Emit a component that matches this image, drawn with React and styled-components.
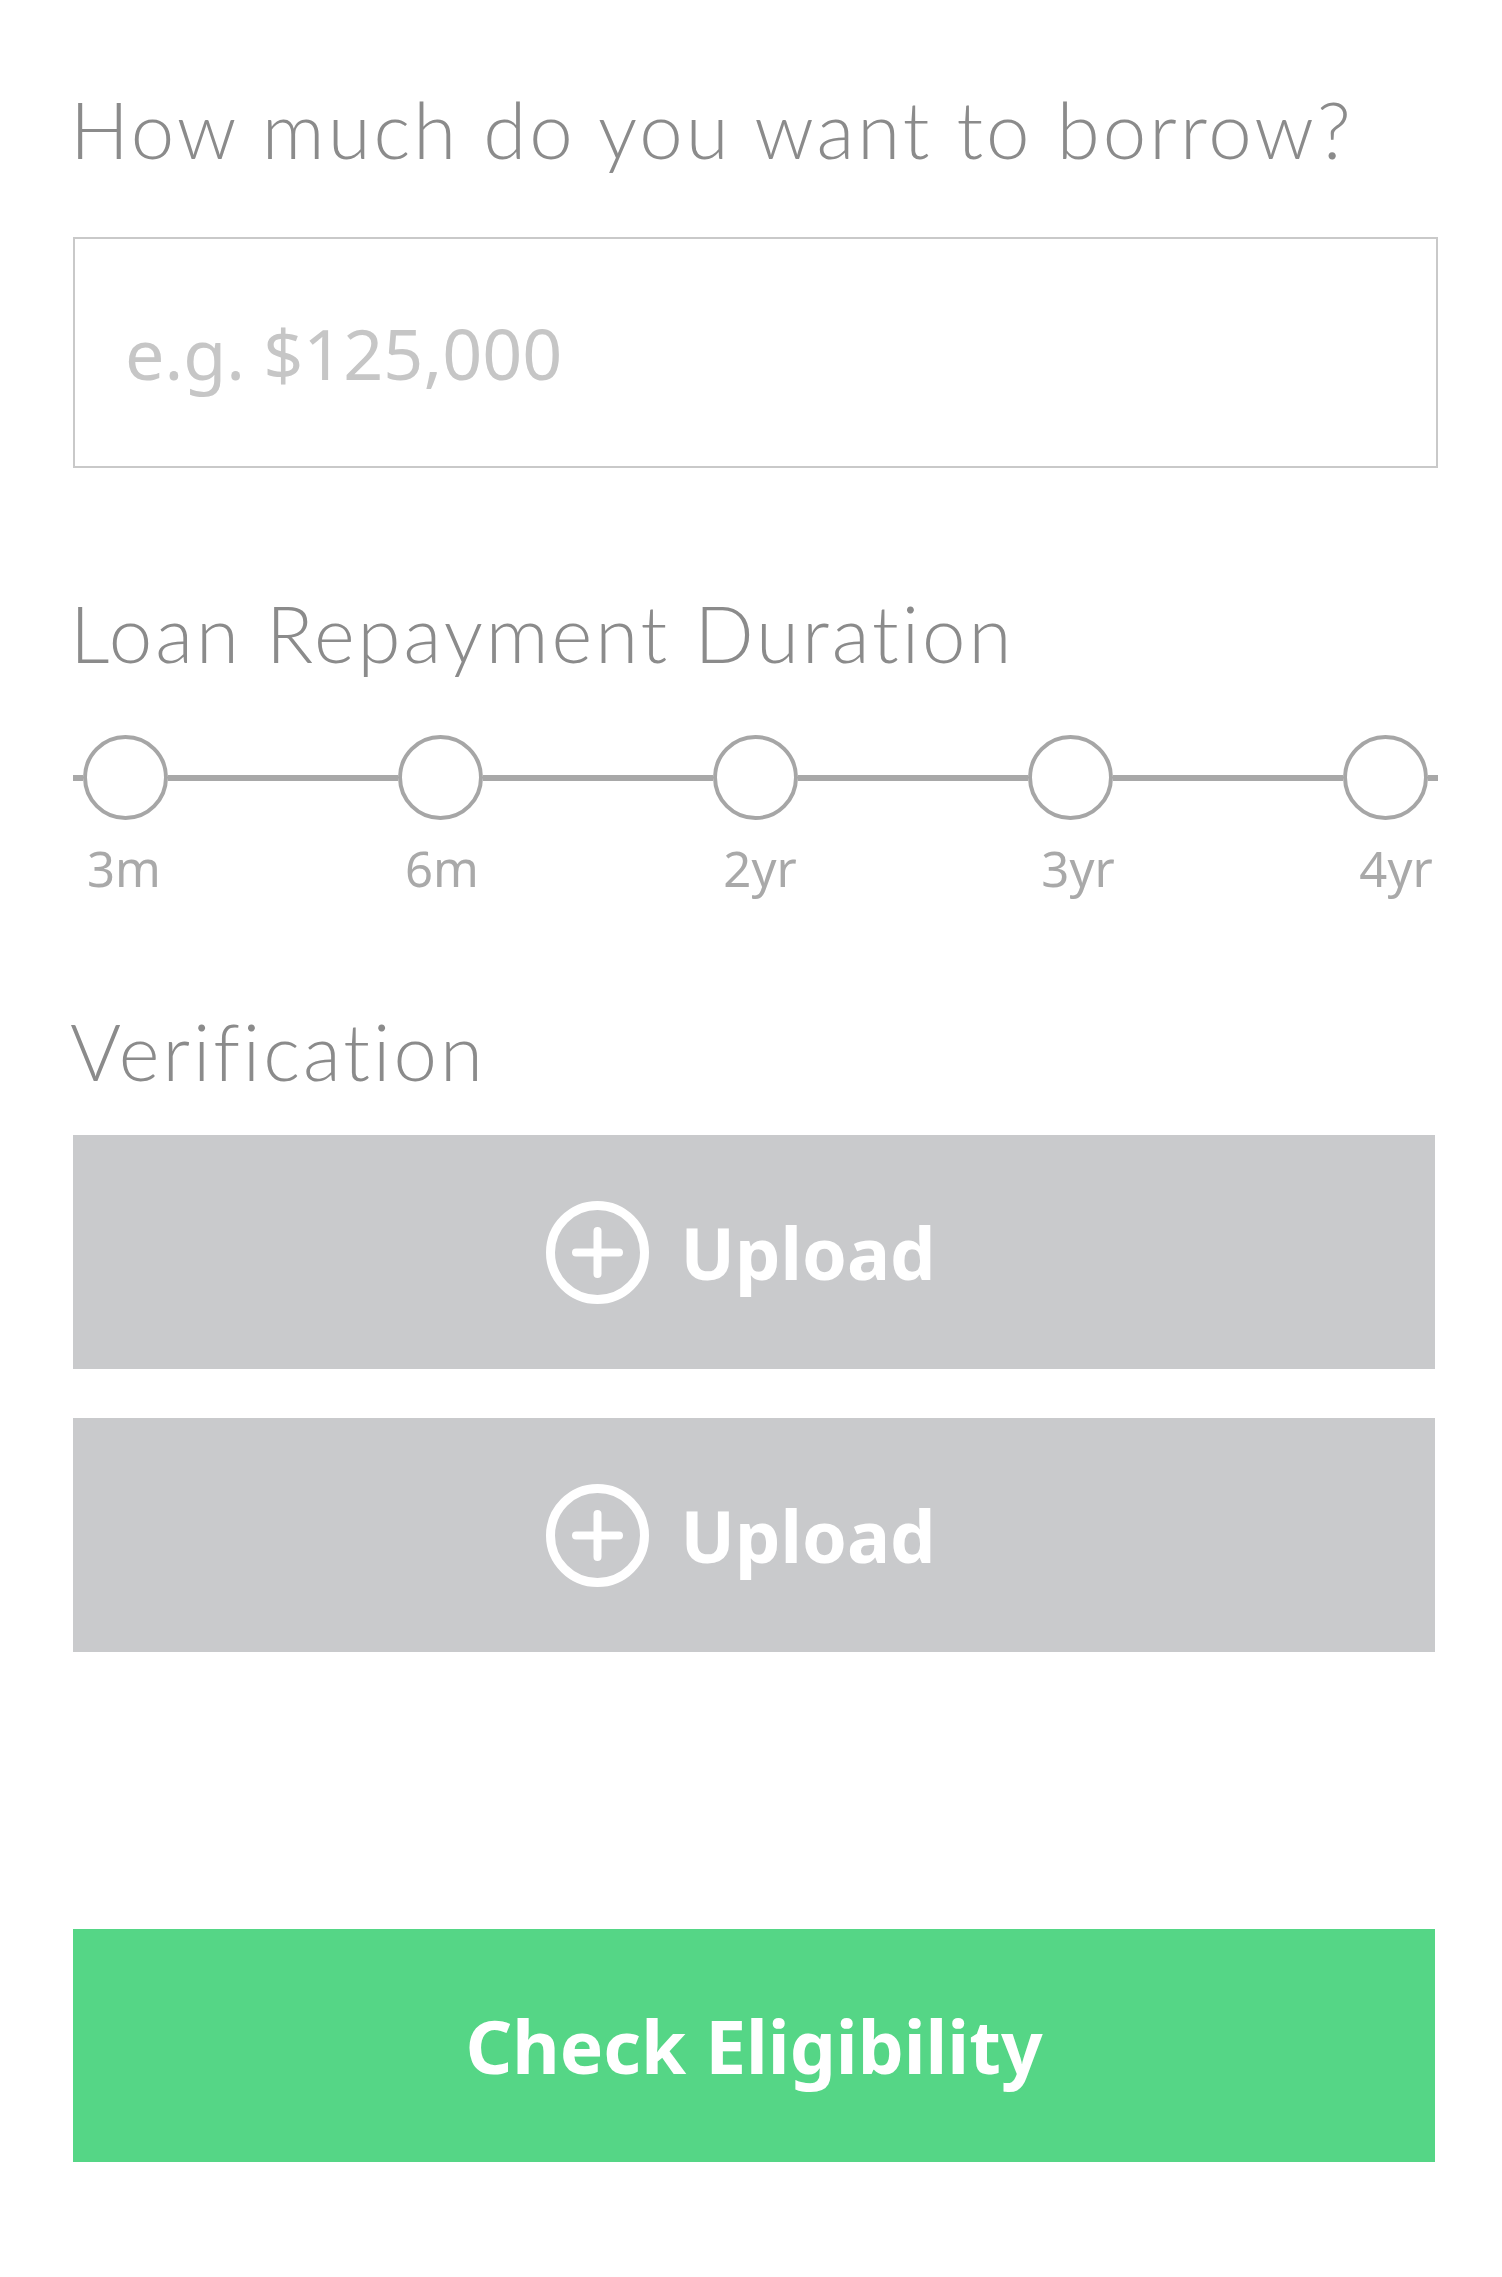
import React from "react";
import styled, { createGlobalStyle } from "styled-components";

const GlobalStyle = createGlobalStyle`
  html, body {
    margin: 0;
    padding: 0;
    background: #ffffff;
  }
  * {
    box-sizing: border-box;
  }
`;

let Page = styled.div`
  width: 1502px;
  padding-left: 73px;
`;
let Column = styled.div`
  width: 1365px;
  display: flex;
  flex-direction: column;
`;
let Heading = styled.h2`
  margin: ${(p) => p.$mt}px 0 0 -3px;
  font-family: Lato, "Noto Sans", sans-serif;
  font-weight: 300;
  font-size: 78px;
  line-height: 94px;
  letter-spacing: 3px;
  color: #8b8b8b;
  white-space: nowrap;
`;
let AmountInput = styled.input`
  margin-top: 61px;
  width: 1365px;
  height: 231px;
  border: 2px solid #c9c9c9;
  border-radius: 0;
  padding: 0 0 0 50px;
  font-family: "Noto Sans", "Open Sans", sans-serif;
  font-size: 70px;
  color: #555;
  outline: none;
  &::placeholder {
    color: #c6c6c6;
  }
`;
let Track = styled.div`
  margin-top: 55px;
  display: flex;
  align-items: flex-start;
`;
let Stub = styled.div`
  width: 10px;
  height: 6px;
  margin-top: 39.5px;
  background: #a8a8a8;
  flex-shrink: 0;
`;
let Segment = styled.div`
  flex: 1;
  height: 6px;
  margin-top: 39.5px;
  background: #a8a8a8;
`;
let Stop = styled.div`
  width: 85px;
  flex-shrink: 0;
  display: flex;
  flex-direction: column;
  align-items: center;
`;
let Knob = styled.div`
  width: 85px;
  height: 85px;
  border-radius: 50%;
  border: 4px solid #a6a6a6;
  background: #fff;
`;
let Tick = styled.span`
  margin-top: 23.5px;
  font-family: "Noto Sans", "Open Sans", sans-serif;
  font-size: 49px;
  line-height: 49px;
  color: #a9a9a9;
  white-space: nowrap;
`;
let UploadButton = styled.button`
  margin-top: ${(p) => p.$mt}px;
  width: 1362px;
  height: 234px;
  border: none;
  border-radius: 0;
  background: #c9cacc;
  display: flex;
  align-items: center;
  justify-content: center;
  gap: 31px;
  padding: 0 26px 0 0;
  cursor: pointer;
`;
let ButtonText = styled.span`
  font-family: "Noto Sans", "Open Sans", sans-serif;
  font-weight: 700;
  font-size: ${(p) => p.$size}px;
  line-height: 1;
  color: #ffffff;
  white-space: nowrap;
`;
let CheckButton = styled.button`
  margin-top: 277px;
  width: 1362px;
  height: 233px;
  border: none;
  border-radius: 0;
  background: #55d686;
  display: flex;
  align-items: center;
  justify-content: center;
  padding: 0;
  cursor: pointer;
`;

function PlusCircle() {
  return (
    <svg width="103" height="103" viewBox="0 0 103 103" fill="none">
      <circle cx="51.5" cy="51.5" r="47" stroke="#fff" strokeWidth="9" />
      <path
        d="M30 51.5h43M51.5 30v43"
        stroke="#fff"
        strokeWidth="8"
        strokeLinecap="round"
      />
    </svg>
  );
}

const durations = ["3m", "6m", "2yr", "3yr", "4yr"];

function DurationSlider() {
  let items = [];
  durations.forEach((d, i) => {
    if (i > 0) items.push(<Segment key={"s" + i} />);
    // the labels sit on a slightly wider spacing than the knobs
    let shift = i * 3 - 1.5;
    items.push(
      <Stop key={d}>
        <Knob />
        <Tick style={{ transform: `translateX(${shift}px)` }}>{d}</Tick>
      </Stop>
    );
  });
  return (
    <Track>
      <Stub />
      {items}
      <Stub />
    </Track>
  );
}

function Upload({ mt }) {
  return (
    <UploadButton $mt={mt}>
      <PlusCircle />
      <ButtonText $size={72}>Upload</ButtonText>
    </UploadButton>
  );
}

export default function App() {
  return (
    <Page>
      <GlobalStyle />
      <Column>
        <Heading $mt={82}>How much do you want to borrow?</Heading>
        <AmountInput placeholder="e.g. $125,000" />
        <Heading $mt={118}>Loan Repayment Duration</Heading>
        <DurationSlider />
        <Heading $mt={111.5}>Verification</Heading>
        <Upload mt={37} />
        <Upload mt={49} />
        <CheckButton>
          <ButtonText $size={73}>Check Eligibility</ButtonText>
        </CheckButton>
      </Column>
    </Page>
  );
}
